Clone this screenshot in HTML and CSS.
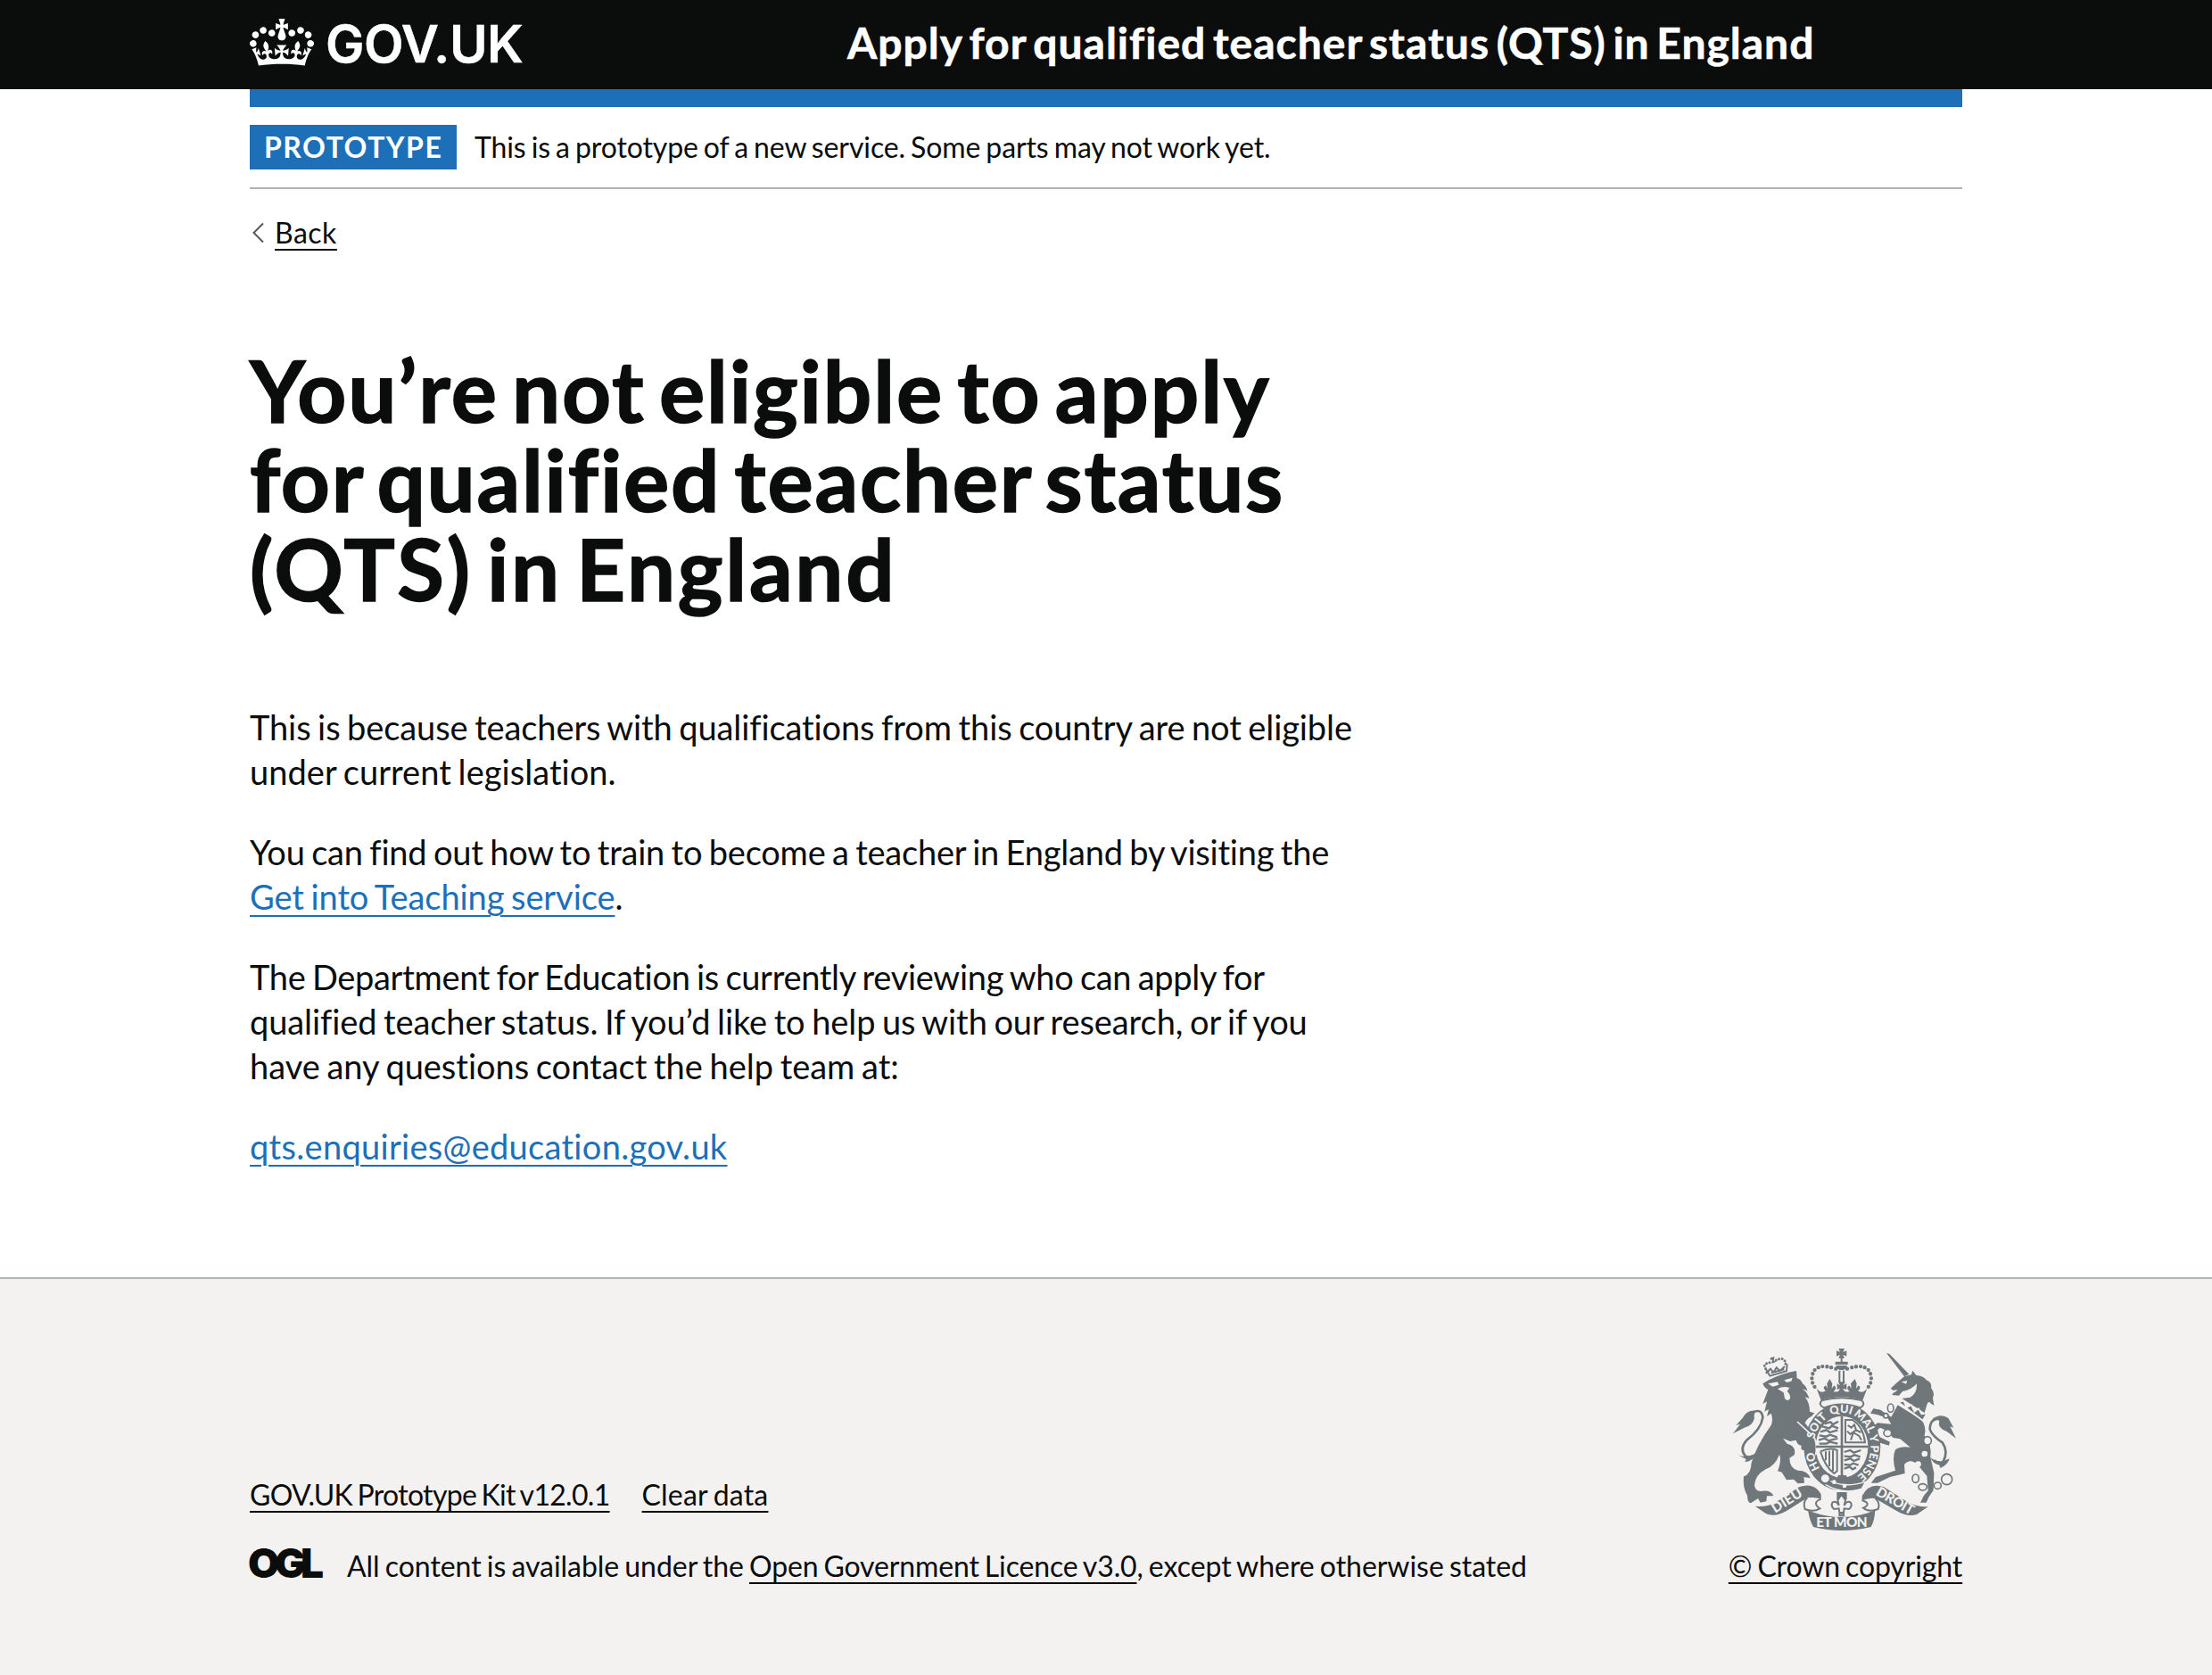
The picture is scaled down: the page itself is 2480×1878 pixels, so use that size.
FILE: index.html
```html
<!DOCTYPE html>
<html lang="en">
<head>
<meta charset="utf-8">
<title>You’re not eligible to apply for qualified teacher status (QTS) in England</title>
<link rel="stylesheet" href="styles.css">
</head>
<body>
<header class="header">
  <div class="container header-inner">
    <a class="logo" href="#">
      <svg class="crown" viewBox="0 0 132 97" aria-hidden="true"><path d="M25 30.2c3.5 1.5 7.7-.2 9.1-3.7 1.5-3.6-.2-7.8-3.9-9.2-3.6-1.4-7.6.3-9.1 3.9-1.4 3.5.3 7.5 3.9 9zM9 39.5c3.6 1.5 7.8-.2 9.2-3.7 1.5-3.6-.2-7.8-3.9-9.1-3.6-1.5-7.6.2-9.1 3.8-1.4 3.5.3 7.5 3.8 9zM4.4 57.2c3.5 1.5 7.7-.2 9.1-3.8 1.5-3.6-.2-7.7-3.9-9.1-3.5-1.5-7.6.3-9.1 3.8-1.4 3.5.3 7.6 3.9 9.1zm38.3-21.4c3.5 1.5 7.7-.2 9.1-3.8 1.5-3.6-.2-7.7-3.9-9.1-3.6-1.5-7.6.3-9.1 3.8-1.3 3.6.4 7.7 3.9 9.1zm64.4-5.6c-3.6 1.5-7.8-.2-9.1-3.7-1.5-3.6.2-7.8 3.8-9.2 3.6-1.4 7.7.3 9.2 3.9 1.3 3.5-.4 7.5-3.9 9zm15.9 9.3c-3.6 1.5-7.7-.2-9.1-3.7-1.5-3.6.2-7.8 3.7-9.1 3.6-1.5 7.7.2 9.2 3.8 1.5 3.5-.3 7.5-3.8 9zm4.7 17.7c-3.6 1.5-7.8-.2-9.2-3.8-1.5-3.6.2-7.7 3.9-9.1 3.6-1.5 7.7.3 9.2 3.8 1.3 3.5-.4 7.6-3.9 9.1zM89.3 35.8c-3.6 1.5-7.8-.2-9.2-3.8-1.4-3.6.2-7.7 3.9-9.1 3.6-1.5 7.7.3 9.2 3.8 1.4 3.6-.3 7.7-3.9 9.1zM69.7 17.7l8.9 4.7V9.3l-8.9 2.8c-.2-.3-.5-.6-.9-.9L72.4 0H59.6l3.5 11.2c-.3.3-.6.5-.9.9l-8.8-2.8v13.1l8.8-4.7c.3.3.6.7.9.9l-5 15.4v.1c-.2.8-.4 1.6-.4 2.4 0 4.1 3.1 7.5 7 8.1h.2c.3 0 .7.1 1 .1.4 0 .7 0 1-.1h.2c4-.6 7.1-4.1 7.1-8.1 0-.8-.1-1.7-.4-2.4V34l-5.1-15.4c.4-.2.7-.6 1-.9zM66 92.8c16.9 0 32.8 1.1 47.1 3.2 4-16.9 8.9-26.7 14-33.5l-9.6-3.4c1 4.9 1.1 7.2 0 10.2-1.5-1.4-3-4.3-4.2-8.7L108.6 76c2.8-2 5-3.2 7.5-3.3-4.4 9.4-10 11.9-13.6 11.2-4.3-.8-6.3-4.6-5.6-7.9 1-4.7 5.7-5.9 8-.5 4.3-8.7-3-11.4-7.6-8.8 7.1-7.2 7.9-13.5 2.1-21.1-8 6.1-8.1 12.3-4.5 20.8-4.7-5.4-12.1-2.5-9.5 6.2 3.4-5.2 7.9-2 7.2 3.1-.6 4.3-6.4 7.8-13.5 7.2-10.3-.9-10.9-8-11.2-13.8 2.5-.5 7.1 1.8 11 7.3L80.2 60c-4.1 4.4-8 5.3-12.3 5.4 1.4-4.4 8-11.6 8-11.6H55.5s6.4 7.2 7.9 11.6c-4.2-.1-8-1-12.3-5.4l1.4 16.4c3.9-5.5 8.5-7.7 10.9-7.3-.3 5.8-.9 12.8-11.1 13.8-7.2.6-12.9-2.9-13.5-7.2-.7-5 3.8-8.3 7.1-3.1 2.7-8.7-4.6-11.6-9.4-6.2 3.7-8.5 3.6-14.7-4.6-20.8-5.8 7.6-5 13.9 2.2 21.1-4.7-2.6-11.9.1-7.7 8.8 2.3-5.5 7.1-4.2 8.1.5.7 3.3-1.3 7.1-5.7 7.9-3.5.7-9-1.8-13.5-11.2 2.5.1 4.7 1.3 7.5 3.3l-4.7-15.4c-1.2 4.4-2.7 7.2-4.3 8.7-1.1-3-.9-5.3 0-10.2l-9.5 3.4c5 6.9 9.9 16.7 14 33.5 14.8-2.1 30.8-3.2 47.7-3.2z"/></svg>
      <span class="logo-text">GOV.UK</span>
    </a>
    <a class="service-name" href="#">Apply for qualified teacher status (QTS) in England</a>
  </div>
</header>
<div class="container">
  <div class="phase-banner">
    <strong class="tag">PROTOTYPE</strong>
    <span class="phase-text">This is a prototype of a new service. Some parts may not work yet.</span>
  </div>
  <a class="back" href="#"><svg class="chevron" viewBox="0 0 14 24" aria-hidden="true"><path d="M13 1.500 2.500 12 13 22.500"/></svg><span class="back-text">Back</span></a>
  <main class="main">
    <h1 class="title">
      <span class="line title-1">You’re not eligible to apply</span>
      <span class="line title-2">for qualified teacher status</span>
      <span class="line title-3">(QTS) in England</span>
    </h1>
    <p class="body">
      <span class="line reason-1">This is because teachers with qualifications from this country are not eligible</span>
      <span class="line reason-2">under current legislation.</span>
    </p>
    <p class="body">
      <span class="line train-1">You can find out how to train to become a teacher in England by visiting the</span>
      <span class="line train-2"><a class="link" href="#">Get into Teaching service</a>.</span>
    </p>
    <p class="body">
      <span class="line review-1">The Department for Education is currently reviewing who can apply for</span>
      <span class="line review-2">qualified teacher status. If you’d like to help us with our research, or if you</span>
      <span class="line review-3">have any questions contact the help team at:</span>
    </p>
    <p class="body"><span class="line email"><a class="link" href="#">qts.enquiries@education.gov.uk</a></span></p>
  </main>
</div>
<footer class="footer">
  <div class="container footer-inner">
    <div class="meta">
      <div class="meta-links">
        <a class="footer-link kit" href="#">GOV.UK Prototype Kit v12.0.1</a>
        <a class="footer-link clear" href="#">Clear data</a>
      </div>
      <div class="licence">
        <svg class="ogl" viewBox="0 0 82 34" role="img" aria-label="Open Government Licence"><text x="-2" y="33" textLength="85" lengthAdjust="spacing">OGL</text></svg>
        <span class="licence-text">All content is available under the <a class="footer-link licence-link" href="#">Open Government Licence v3.0</a>, except where otherwise stated</span>
      </div>
    </div>
    <a class="copyright" href="#">
      <svg class="crest" viewBox="60 60 780 630" aria-hidden="true">
        <defs><path id="garter" d="M439 518A96 115 0 0 1 439 288A96 115 0 0 1 439 518"/></defs>
        <!-- lion -->
        <path class="ink" d="M172 190L192 178Q240 154 285 147L287 172Q300 175 306 190Q318 198 322 214L306 208Q324 222 328 240L314 235Q330 255 330 284L346 289L336 300Q322 306 314 322L342 360Q350 392 346 425L326 432L312 414Q298 416 302 398Q288 396 284 380L264 384L240 374L254 392Q286 400 278 430L262 440Q262 474 290 482Q324 482 332 508L310 504L312 524L290 526L276 512L252 514L236 488L222 484Q236 450 228 428Q214 466 182 478Q148 496 144 530Q144 548 164 552Q200 546 208 568L186 568L184 586L164 590L156 576L132 592Q120 590 120 566Q104 540 108 502Q132 496 134 456Q152 396 200 330Q208 310 200 290L186 300L192 276L178 284L186 250L172 258L190 210Q178 206 172 190Z"/>
        <path class="paper" d="M190 190L222 184L226 194L205 200ZM244 178L272 170L268 182L252 186ZM222 208Q240 196 262 204L254 216Q266 226 264 240Q256 252 246 240L242 220Z"/>
        <path class="line-ink" d="M182 140L196 164L252 148L254 124M182 155L198 140L208 153L218 136L230 147L246 132M200 154L244 142"/>
        <path class="beads small" d="M190 148Q160 122 204 118Q250 90 249 130"/>
        <path class="ink" d="M198 103L212 99L209 112L217 116L202 122L205 111L196 109Z"/>
        <path class="tail" d="M118 300Q168 262 172 304Q166 344 118 380Q92 410 114 434Q130 444 150 428"/>
        <path class="ink" d="M152 281Q118 276 104 306L82 330L96 326L72 358L110 338Q138 332 144 306Q140 290 152 281ZM88 430Q112 442 152 424Q140 452 112 454L116 444Z"/>
        <!-- unicorn -->
        <path class="ink" d="M588 87L598 90L664 158L648 166ZM602 206L624 186L648 166L672 160L676 146L688 162Q714 164 722 178Q742 186 738 204Q752 222 744 238L748 264L736 256Q728 244 722 268L716 288Q684 268 640 240L668 236Q692 222 690 190Q674 210 642 216L630 230L606 228L616 216Z"/>
        <path class="paper" d="M638 184L658 180L654 191ZM606 214L626 210L616 220Z"/>
        <path class="ink" d="M626 262L706 312Q724 336 716 364Q742 396 736 438L748 490L746 548L730 572L722 590L702 590L714 566L728 550L724 500L692 462Q668 440 648 462L650 492L600 504L558 524L536 524L552 504L618 482Q606 440 618 412Q634 400 668 404L634 376L610 372Q586 342 566 338L554 350L566 370L600 386L596 398L562 388L536 340L558 322L604 326L592 306L556 294L534 290L544 274L568 278L604 302Z"/>
        <path class="coronet" d="M628 252L710 314L724 290L706 292L696 274L682 284L672 262L656 270L646 248Z"/>
        <g class="chain"><ellipse cx="602" cy="272" rx="10" ry="14"/><circle cx="586" cy="298" r="8"/><ellipse cx="592" cy="356" rx="13" ry="12"/><ellipse cx="726" cy="382" rx="13" ry="14"/><ellipse cx="686" cy="509" rx="11" ry="14"/><ellipse cx="710" cy="538" rx="14" ry="11"/><ellipse cx="760" cy="533" rx="12" ry="11"/><circle cx="791" cy="512" r="18"/></g>
        <path class="paper" d="M716 416a9 9 0 1 0 1 20a9 9 0 1 0-1-20M694 451a9 9 0 1 0 1 20a9 9 0 1 0-1-20"/>
        <path class="tail" d="M772 308Q734 304 734 344Q742 366 776 388Q798 420 778 454Q766 464 748 448"/>
        <path class="ink" d="M742 308Q772 288 796 306L814 338L802 334L822 374L790 350Q758 340 766 316Q760 308 742 308ZM736 438Q764 462 800 442Q796 462 770 474L766 464Q744 460 736 438Z"/>
        <!-- royal crown -->
        <path class="ink" d="M427 72H447L442 84L454 79V98L442 93L447 105H427L432 93L420 98V79L432 84ZM434 104H440V116H458V126H416V116H434ZM418 129H456Q454 143 437 145Q420 143 418 129Z"/>
        <path class="line-ink" d="M430 146V186M444 146V186"/>
        <path class="beads" d="M418 140Q340 114 337 174Q338 194 352 206M456 140Q534 114 537 174Q536 194 522 206"/>
        <path class="ink" d="M352 204Q366 226 384 214Q370 204 384 196L390 206L388 190L397 174L406 190L404 206L412 196Q424 206 410 216Q426 222 432 206L422 210V190L432 196L426 184H450L442 196L454 190V210L442 206Q448 222 464 216Q450 206 462 196L470 206L468 190L482 174L488 190L486 206L494 196Q506 204 492 214Q510 226 524 204L508 246Q437 224 368 246Z"/>
        <!-- garter and shield -->
        <ellipse class="ink" cx="439" cy="403" rx="129" ry="147"/>
        <ellipse class="paper" cx="438" cy="403" rx="88" ry="104"/>
        <path class="hoop" d="M372 246Q437 230 504 246Q520 260 500 271Q437 248 378 271Q356 260 372 246Z"/>
        <path class="crease" d="M288 318L338 364M346 372Q356 398 350 430"/>
        <g class="motto"><text><textPath href="#garter" startOffset="18%">HO</textPath></text><text><textPath href="#garter" startOffset="35.500%">SOIT</textPath></text><text><textPath href="#garter" startOffset="49.500%">QUI</textPath></text><text><textPath href="#garter" startOffset="62%">MAL</textPath></text><text><textPath href="#garter" startOffset="71%">Y</textPath></text><text><textPath href="#garter" startOffset="83%">PENSE</textPath></text></g>
        <path class="shield" d="M438 300V510M350 402H526"/>
        <path class="charges" d="M380 325l20-6 8 8 18-10M372 334l24 6 8-8 22 8M366 352l20-6 12 8 26-8M362 364l24 4 12-6 24 8M360 380l20-6 14 8 30-8M362 392l24 0 12-6 26 6M446 420l20-6 12 8 24-8M446 434l22 2 12-6 20 6M446 448l20-6 12 8 20-8M446 462l20 2 10-6 18 6M446 476l18-6 10 8 12-6"/>
        <path class="line-ink" d="M450 312V388H516Q510 334 474 312ZM458 330L470 338 480 328 486 346 502 354M486 346L466 360 456 350M476 354L496 366 504 380M476 356L468 380"/>
        <path class="line-ink" d="M366 418Q398 404 422 414V484L412 492Q382 470 366 418M384 418V448M396 416V468M408 414V484"/>
        <path class="ink" d="M426 498H452L460 512H420Z"/>
        <path class="strap" d="M372 500Q430 548 518 520L504 544Q440 564 384 530Z"/>
        <circle class="buckle" cx="382" cy="509" r="17"/>
        <circle class="paper" cx="412" cy="521" r="7"/><circle class="paper" cx="447" cy="534" r="7"/>
        <!-- motto ribbon -->
        <path class="ink" d="M146 602Q184 606 212 592L294 538Q344 520 368 562L368 578Q344 570 322 574L252 618Q214 640 184 628ZM728 604Q690 604 662 590L580 538Q530 520 506 568V584Q530 572 550 576L622 618Q660 640 690 630ZM324 616Q437 662 550 616Q548 652 536 672Q437 696 342 672Q330 652 324 616Z"/>
        <path class="ribbon" d="M322 574Q306 586 314 612Q342 624 364 610Q336 590 368 578M550 576Q568 590 560 612Q530 624 510 608Q540 594 506 582"/>
        <g class="scroll"><text transform="translate(214 626) rotate(-32)" textLength="112" lengthAdjust="spacing">DIEU</text><text x="352" y="673" textLength="172" lengthAdjust="spacing">ET MON</text><text transform="translate(550 563) rotate(30)" textLength="138" lengthAdjust="spacing">DROIT</text></g>
        <path class="ink" d="M421 555H455V580H421Z"/>
        <path class="lily" d="M437 562L450 582 446 600Q454 582 468 590Q474 602 462 612L446 610 444 624H430L428 610 412 612Q400 602 406 590Q420 582 428 600L424 582ZM430 626H444V634H430Z"/>
      </svg>
      <span class="footer-link copy-text">© Crown copyright</span>
    </a>
  </div>
</footer>
</body>
</html>
```
FILE: styles.css
```css
* { box-sizing: border-box; }
body { margin: 0; background: #fff; color: #0b0c0c; font-family: Lato, sans-serif; font-size: 38px; line-height: 50px; font-variant-ligatures: none; word-spacing: -2px; }
a { color: inherit; text-decoration: none; }
.container { width: 1920px; margin: 0 auto; }

.header { height: 100px; background: #0b0c0c; color: #fff; margin-bottom: 20px; }
.header-inner { display: flex; align-items: center; height: 120px; padding-bottom: 5px; border-bottom: 20px solid #1d70b8; }
.logo { display: flex; width: 670px; align-items: center; }
.crown { width: 72px; height: 53px; fill: #fff; }
.logo-text { font: 600 58px/60px Inter, sans-serif; margin: 3px 0 0 13px; white-space: nowrap; letter-spacing: -0.5px; -webkit-text-stroke: 0.5px #fff; }
.service-name { font-weight: 700; font-size: 48px; white-space: nowrap; word-spacing: -5px; letter-spacing: 1px; -webkit-text-stroke: 0.6px #fff; }

.phase-banner { display: flex; align-items: center; padding: 20px 0; border-bottom: 2px solid #b1b4b6; font-size: 32px; }
.tag { width: 232px; height: 50px; background: #1d70b8; color: #fff; padding-left: 16px; margin-right: 20px; white-space: nowrap; letter-spacing: 1.5px; }
.phase-text { white-space: nowrap; letter-spacing: -0.11px; }
.back { display: flex; align-items: center; margin-top: 24px; font-size: 32px; }
.chevron { width: 14px; height: 24px; margin: 0 12px 0 2px; fill: none; stroke: #505a5f; stroke-width: 2; }
.back-text { letter-spacing: 0.5px; }
.back-text, .link, .footer-link { text-decoration: underline; text-decoration-thickness: 2px; text-underline-offset: 6px; }

.main { padding-top: 101px; height: 1146px; }
.line { display: block; white-space: nowrap; }
.title { margin: 0 0 103px; font-size: 96px; line-height: 100px; word-spacing: -10px; -webkit-text-stroke: 1.5px #0b0c0c; }
.title-1 { letter-spacing: 1.88px; }
.title-2 { letter-spacing: 1.75px; }
.title-3 { letter-spacing: 2.75px; }
.body { margin: 0 0 40px; }
.reason-1 { letter-spacing: -0.1px; }
.reason-2 { letter-spacing: 0.04px; }
.train-1 { letter-spacing: -0.21px; }
.train-2 { letter-spacing: -0.08px; }
.review-1 { letter-spacing: -0.3px; }
.review-2 { letter-spacing: -0.09px; }
.review-3 { letter-spacing: -0.02px; }
.email { letter-spacing: 0.3px; }
.link { color: #1d70b8; }

.footer { height: 446px; background: #f3f2f1; border-top: 2px solid #b1b4b6; font-size: 32px; line-height: 40px; }
.footer-inner { display: flex; justify-content: space-between; align-items: flex-end; height: 342px; }
.meta-links { display: flex; gap: 36px; margin-bottom: 40px; }
.kit { letter-spacing: -0.7px; }
.clear { letter-spacing: 0.2px; }
.licence { display: flex; align-items: center; white-space: pre; }
.licence-text { letter-spacing: -0.04px; }
.licence-link { letter-spacing: -0.14px; }
.ogl { width: 82px; height: 34px; margin-right: 27px; margin-bottom: 6px; overflow: visible; }
.ogl text { font: 900 46px Inter, sans-serif; fill: #0b0c0c; }
.copyright { display: flex; flex-direction: column; align-items: center; width: 262px; }
.copy-text { white-space: nowrap; letter-spacing: -0.12px; }

.crest { width: 260px; height: 210px; margin-bottom: 18px; }
.ink { fill: #6f777b; }
.paper { fill: #f3f2f1; }
.crease { fill: none; stroke: #f3f2f1; stroke-width: 5; }
.line-ink, .tail, .charges, .shield { fill: none; stroke: #6f777b; stroke-width: 6; }
.tail { stroke-width: 8; }
.charges { stroke-width: 7; }
.shield { stroke-width: 8; }
.beads { fill: none; stroke: #6f777b; stroke-width: 13; stroke-linecap: round; stroke-dasharray: 0 15; }
.small { stroke-width: 9; stroke-dasharray: 0 11; }
.coronet { fill: #6f777b; stroke: #f3f2f1; stroke-width: 5; }
.chain { fill: #f3f2f1; stroke: #6f777b; stroke-width: 5; }
.hoop, .ribbon, .lily { fill: #f3f2f1; stroke: #6f777b; stroke-width: 6; }
.strap { fill: #6f777b; stroke: #f3f2f1; stroke-width: 4; }
.buckle { fill: #f3f2f1; stroke: #6f777b; stroke-width: 7; }
.motto text, .scroll text { font: 900 38px Lato, sans-serif; fill: #f3f2f1; word-spacing: 0; }
.motto text { text-anchor: middle; }
.scroll text { font-size: 46px; }
```
